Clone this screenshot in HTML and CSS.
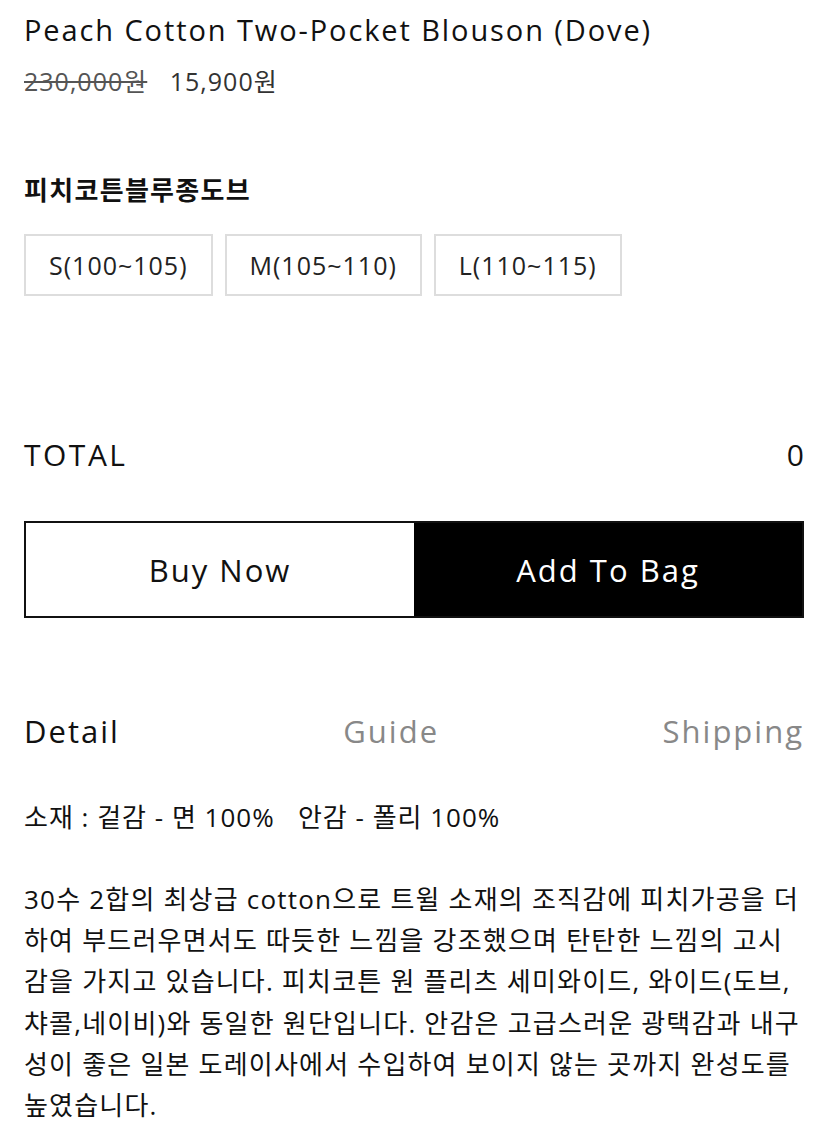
FILE: index.html
```html
<!DOCTYPE html>
<html lang="ko">
<head>
    <meta charset="UTF-8">
    <meta name="viewport" content="width=device-width, initial-scale=1.0">
    <title>Peach Cotton Two-Pocket Blouson (Dove)</title>
    <link rel="stylesheet" href="styles.css">
</head>
<body>
    <div class="product">
        <h1 class="product-name">Peach Cotton Two-Pocket Blouson (Dove)</h1>
        <div class="price">
            <span class="price-old">230,000원</span>
            <span class="price-now">15,900원</span>
        </div>

        <div class="option">
            <h2 class="option-title">피치코튼블루종도브</h2>
            <div class="sizes">
                <button class="size">S(100~105)</button>
                <button class="size">M(105~110)</button>
                <button class="size">L(110~115)</button>
            </div>
        </div>

        <div class="total">
            <span class="total-label">TOTAL</span>
            <span>0</span>
        </div>

        <div class="actions">
            <button class="btn btn-buy">Buy Now</button>
            <button class="btn btn-bag">Add To Bag</button>
        </div>

        <div class="tabs">
            <span class="tab active">Detail</span>
            <span class="tab">Guide</span>
            <span class="tab">Shipping</span>
        </div>

        <div class="detail">
            <p class="material">소재 : 겉감 - 면 100% &nbsp; 안감 - 폴리 100%</p>
            <p class="desc">30수 2합의 최상급 cotton으로 트윌 소재의 조직감에 피치가공을 더하여 부드러우면서도 따듯한 느낌을 강조했으며 탄탄한 느낌의 고시감을 가지고 있습니다. 피치코튼 원 플리츠 세미와이드, 와이드(도브,챠콜,네이비)와 동일한 원단입니다. 안감은 고급스러운 광택감과 내구성이 좋은 일본 도레이사에서 수입하여 보이지 않는 곳까지 완성도를 높였습니다.</p>
        </div>
    </div>
</body>
</html>
```

FILE: styles.css
```css
/* 기본 */
body {
    margin: 0;
    font-family: 'Open Sans', 'Noto Sans CJK KR', sans-serif;
    color: #111;
    background: #fff;
}

.product {
    padding: 10px 24px 0;
}

.product-name {
    font-size: 29px;
    font-weight: 400;
    letter-spacing: 1.9px;
    margin: 0;
    line-height: 40px;
}

.price {
    font-size: 25px;
    letter-spacing: 1px;
    line-height: 34px;
    margin-top: 14px;
}

.price-old {
    color: #555;
    text-decoration: line-through;
    margin-right: 15px;
}

.price-now {
    color: #333;
}

/* 옵션 */
.option {
    margin-top: 75px;
}

.option-title {
    font-size: 26px;
    font-weight: 700;
    letter-spacing: 1.3px;
    margin: 0;
    line-height: 34px;
}

.sizes {
    display: flex;
    gap: 12px;
    margin-top: 27px;
}

.size {
    font-family: inherit;
    font-size: 25px;
    letter-spacing: 1px;
    color: #222;
    background: #fff;
    border: 2px solid #ddd;
    height: 62px;
    padding: 0 23px;
}

/* 합계 */
.total {
    display: flex;
    justify-content: space-between;
    font-size: 30px;
    line-height: 40px;
    margin-top: 139px;
}

.total-label {
    letter-spacing: 2.5px;
}

.actions {
    display: flex;
    border: 2px solid #111;
    margin-top: 46px;
    height: 97px;
    box-sizing: border-box;
}

.btn {
    flex: 1;
    font-family: inherit;
    font-size: 31px;
    letter-spacing: 2px;
    border: none;
}

.btn-buy {
    background: #fff;
    color: #111;
}

.btn-bag {
    background: #000;
    color: #fff;
}

/* 탭 */
.tabs {
    display: flex;
    justify-content: space-between;
    font-size: 31px;
    letter-spacing: 2px;
    line-height: 40px;
    margin-top: 93px;
}

.tab {
    color: #888;
}

.tab.active {
    color: #111;
}

.detail {
    margin-top: 49px;
}

.material {
    font-size: 26px;
    letter-spacing: 1px;
    line-height: 34px;
    margin: 0;
}

.desc {
    font-size: 26px;
    letter-spacing: 1.2px;
    line-height: 41.2px;
    word-break: break-all;
    margin: 45px 0 0;
}
```
